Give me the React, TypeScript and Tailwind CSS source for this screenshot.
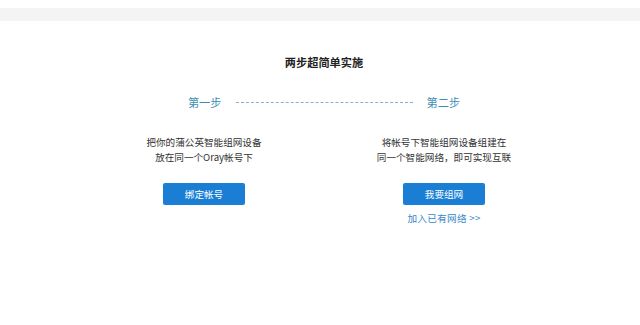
import React from "react";

const font = "font-['Microsoft_YaHei','Noto_Sans_CJK_SC',sans-serif]";

function StepColumn({
  lines,
  button,
  link,
}: {
  lines: string[];
  button: string;
  link?: string;
}) {
  return (
    <div className="w-[240px] flex flex-col items-center">
      <div className="text-[9.6px] leading-[15px] text-[#333] text-center">
        {lines.map((l) => (
          <p key={l}>{l}</p>
        ))}
      </div>
      <button className="mt-[18px] w-[82px] h-[22px] rounded-[2px] bg-[#1a7fd4] text-white text-[9.6px] leading-[22px]">
        {button}
      </button>
      {link && (
        <a className="mt-[6px] text-[9.6px] leading-[14px] text-[#3a87c6] tracking-[0.3px]">{link}</a>
      )}
    </div>
  );
}

export default function App() {
  return (
    <div className={`w-full h-[325px] bg-white ${font}`}>
      {/* Top strip */}
      <div className="h-2 bg-white" />
      <div className="h-[13px] bg-[#f4f4f4]" />

      <div className="pl-2 flex flex-col items-center">
        <h2 className="mt-[33px] text-[11.2px] leading-[16px] font-bold text-[#222]">两步超简单实施</h2>

        {/* Steps */}
        <div className="mt-[24px] flex items-center text-[11.2px] leading-[16px] text-[#3f8fb4]">
          <span>第一步</span>
          <div className="mx-[14px] w-[177px] border-t border-dashed border-[#7fb5cf]" />
          <span>第二步</span>
        </div>

        <div className="mt-[25px] flex">
          <StepColumn lines={["把你的蒲公英智能组网设备", "放在同一个Oray帐号下"]} button="绑定帐号" />
          <StepColumn
            lines={["将帐号下智能组网设备组建在", "同一个智能网络，即可实现互联"]}
            button="我要组网"
            link="加入已有网络 >>"
          />
        </div>
      </div>
    </div>
  );
}
